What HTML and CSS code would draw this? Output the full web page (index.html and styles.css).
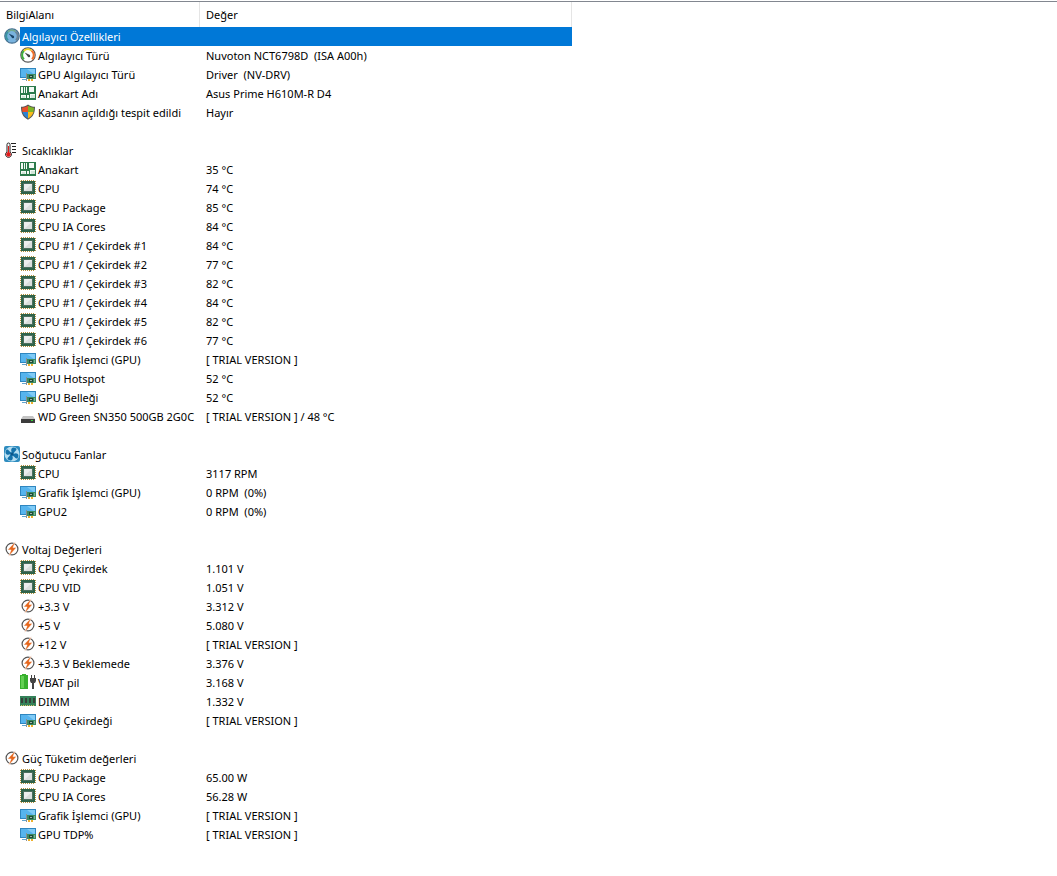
FILE: index.html
```html
<!DOCTYPE html>
<html lang="tr">
<head>
  <meta charset="UTF-8">
  <meta name="viewport" content="width=device-width, initial-scale=1.0">
  <title>Algılayıcı</title>
  <link rel="stylesheet" href="styles.css">
</head>
<body>
  <!-- Icon set -->
  <svg class="sprite" aria-hidden="true">
    <symbol id="gauge" viewBox="0 0 16 16">
      <circle cx="8" cy="8" r="7.2" fill="#fff" stroke="#555" stroke-width="1.2"/>
      <path d="M4 12.2A5.6 5.6 0 0 1 4 3.8" fill="none" stroke="#3fae3c" stroke-width="2"/>
      <path d="M4 3.8A5.6 5.6 0 0 1 11.5 3.6" fill="none" stroke="#f2d21f" stroke-width="2"/>
      <path d="M11.5 3.6A5.6 5.6 0 0 1 12 12.2" fill="none" stroke="#f0702a" stroke-width="2"/>
      <path d="M4.6 5.4L9 7.6A1.3 1.3 0 1 1 7.6 9.2Z" fill="#444"/>
    </symbol>
    <symbol id="gauge-selected" viewBox="0 0 16 16">
      <circle cx="8" cy="8" r="7.2" fill="#79b3df" stroke="#456f90" stroke-width="1.3"/>
      <path d="M4 12.2A5.6 5.6 0 0 1 4 3.8" fill="none" stroke="#3a94a0" stroke-width="2"/>
      <path d="M4 3.8A5.6 5.6 0 0 1 11.5 3.6" fill="none" stroke="#72a890" stroke-width="2"/>
      <path d="M11.5 3.6A5.6 5.6 0 0 1 12 12.2" fill="none" stroke="#6a8498" stroke-width="2"/>
      <path d="M4.6 5.4L9 7.6A1.3 1.3 0 1 1 7.6 9.2Z" fill="#1b4468"/>
    </symbol>
    <symbol id="gpu" viewBox="0 0 16 16">
      <path d="M0 2h16v10H0z" fill="#2f86bf"/>
      <path d="M1 3h14v8H1z" fill="#56b4ee"/>
      <path d="M7 3h8v6z" fill="#80cbf6"/>
      <path d="M2 13h4v1H2z" fill="#62a5cf"/>
      <path d="M6 7h1v8H6z" fill="#8b8f91"/>
      <path d="M7 8h9v5H7z" fill="#3c8a62"/>
      <path d="M9 9h4v3H9z" fill="#1d4c37"/>
      <path d="M10 10h2v1h-2z" fill="#9fb8ab"/>
      <path d="M14 9h1v3h-1z" fill="#7cb597"/>
      <path d="M8 13h2v2H8zM11 13h2v2h-2z" fill="#eeb02c"/>
    </symbol>
    <symbol id="board" viewBox="0 0 16 16">
      <path d="M0 1h16v14H0z" fill="#2b7a4b"/>
      <path d="M1 2h2v6H1zM4 2h1v6H4zM6 2h1v6H6zM9 2h5v5H9zM1 10h5v3H1zM7 10h2v3H7zM10 9h5v4h-5z" fill="#f3faf5"/>
      <path d="M2 11h3v2H2zM11 10h4v3h-4z" fill="#d2e6d9"/>
    </symbol>
    <symbol id="shield" viewBox="0 0 16 16">
      <path d="M8 0.5C10 2 12.5 2.8 15 2.8C15 8.5 13.5 13 8 15.8C2.5 13 1 8.5 1 2.8C3.5 2.8 6 2 8 0.5Z" fill="#555"/>
      <path d="M8 1.8V8H2.5C2.1 6.5 2 5 2 3.7C4.3 3.6 6.3 2.9 8 1.8Z" fill="#e8502a"/>
      <path d="M8 1.8C9.7 2.9 11.7 3.6 14 3.7C14 5 13.9 6.5 13.5 8H8Z" fill="#7fb526"/>
      <path d="M2.5 8H8V14.6C5.2 13 3.3 11 2.5 8Z" fill="#2d82d2"/>
      <path d="M8 8H13.5C12.7 11 10.8 13 8 14.6Z" fill="#f8bd1c"/>
    </symbol>
    <symbol id="thermo" viewBox="0 0 16 16">
      <path d="M3 10V2.5a1.5 1.5 0 0 1 3 0V10a2.900 2.900 0 1 1-3 0z" fill="#fff" stroke="#222"/>
      <path d="M4 4h1v7H4z" fill="#e01b1b"/>
      <circle cx="4.500" cy="12.400" r="2.300" fill="#e01b1b"/>
      <path d="M7 1h5v1H7zM8 4h4v1H8zM8 7h4v1H8zM8 10h4v1H8z" fill="#222"/>
    </symbol>
    <symbol id="cpu" viewBox="0 0 16 16">
      <path d="M1 0.500h14M1 14.500h14M0.500 1v13M15.500 1v13" fill="none" stroke="#b58f3c" stroke-dasharray="1 1"/>
      <path d="M1 1h14v13H1z" fill="#2f6349"/>
      <path d="M3 3h10v9H3z" fill="#4c6f5e"/>
      <path d="M4 4h8v7H4z" fill="#dadedc"/>
      <path d="M4 4h8l-8 7z" fill="#eceeed"/>
    </symbol>
    <symbol id="disk" viewBox="0 0 16 16">
      <path d="M3 8h10l2 3H1z" fill="#c4c4c4"/>
      <path d="M1 11h14v4H1z" fill="#3c3c3c"/>
      <path d="M11 12h2v1h-2z" fill="#37d63d"/>
    </symbol>
    <symbol id="fan" viewBox="0 0 16 16">
      <rect width="16" height="16" rx="2" fill="#2e8cbf"/>
      <circle cx="8" cy="8" r="7.500" fill="#b5def2"/>
      <path d="M7 7C2.500 5 4 1 8 1C9.500 2.500 8 4 9 7C11 2.500 15 4 15 8C13.500 9.500 12 8 9 9C13.500 11 12 15 8 15C6.500 13.500 8 12 7 9C5 13.500 1 12 1 8C2.500 6.500 4 8 7 7Z" fill="#1673ab" transform="rotate(40 8 8)"/>
      <circle cx="8" cy="8" r="1.500" fill="#0c5588"/>
    </symbol>
    <symbol id="bolt" viewBox="0 0 16 16">
      <circle cx="8" cy="8" r="5.900" fill="#fff" stroke="#555" stroke-width="1.200"/>
      <path d="M11.500 0.500L3.600 8.900h3.500L4.500 15.500l8-8.900H9z" fill="#e5661c" stroke="#fff" stroke-width="0.500"/>
    </symbol>
    <symbol id="battery" viewBox="0 0 16 16">
      <path d="M2 0h4v1h2v14H0V1h2z" fill="#37b02d"/>
      <path d="M1 2h3v12H1z" fill="#62d052"/>
      <path d="M11 1h1v3h-1zM14 1h1v3h-1zM10 4h6v3l-1 2h-1v6h-2V9h-1l-1-2z" fill="#444"/>
    </symbol>
    <symbol id="ram" viewBox="0 0 16 16">
      <path d="M0 3h16v10H0z" fill="#35825a"/>
      <path d="M1 5h2v5H1zM5 5h2v5H5zM9 5h2v5H9zM13 5h2v5h-2z" fill="#36403a"/>
      <path d="M1 12h1v1H1zM3 12h1v1H3zM5 12h1v1H5zM7 12h1v1H7zM9 12h1v1H9zM11 12h1v1h-1zM13 12h1v1h-1z" fill="#d8c26a"/>
    </symbol>
  </svg>

  <div class="panel">
    <table class="sensors">
      <colgroup>
        <col class="col-name">
        <col class="col-value">
      </colgroup>
      <thead>
        <tr><th scope="col">BilgiAlanı</th><th scope="col">Değer</th></tr>
      </thead>
      <!-- Sensor properties -->
      <tbody>
        <tr class="group selected"><td><div class="item"><svg class="icon"><use href="#gauge-selected"/></svg><span class="label">Algılayıcı Özellikleri</span></div></td><td></td></tr>
        <tr><td><div class="item"><svg class="icon"><use href="#gauge"/></svg><span class="label">Algılayıcı Türü</span></div></td><td>Nuvoton NCT6798D  (ISA A00h)</td></tr>
        <tr><td><div class="item"><svg class="icon"><use href="#gpu"/></svg><span class="label">GPU Algılayıcı Türü</span></div></td><td>Driver  (NV-DRV)</td></tr>
        <tr><td><div class="item"><svg class="icon"><use href="#board"/></svg><span class="label">Anakart Adı</span></div></td><td>Asus Prime H610M-R D4</td></tr>
        <tr><td><div class="item"><svg class="icon"><use href="#shield"/></svg><span class="label">Kasanın açıldığı tespit edildi</span></div></td><td>Hayır</td></tr>
        <tr class="spacer"><td colspan="2"></td></tr>
      </tbody>
      <!-- Temperatures -->
      <tbody>
        <tr class="group"><td><div class="item"><svg class="icon"><use href="#thermo"/></svg><span class="label">Sıcaklıklar</span></div></td><td></td></tr>
        <tr><td><div class="item"><svg class="icon"><use href="#board"/></svg><span class="label">Anakart</span></div></td><td>35 °C</td></tr>
        <tr><td><div class="item"><svg class="icon"><use href="#cpu"/></svg><span class="label">CPU</span></div></td><td>74 °C</td></tr>
        <tr><td><div class="item"><svg class="icon"><use href="#cpu"/></svg><span class="label">CPU Package</span></div></td><td>85 °C</td></tr>
        <tr><td><div class="item"><svg class="icon"><use href="#cpu"/></svg><span class="label">CPU IA Cores</span></div></td><td>84 °C</td></tr>
        <tr><td><div class="item"><svg class="icon"><use href="#cpu"/></svg><span class="label">CPU #1 / Çekirdek #1</span></div></td><td>84 °C</td></tr>
        <tr><td><div class="item"><svg class="icon"><use href="#cpu"/></svg><span class="label">CPU #1 / Çekirdek #2</span></div></td><td>77 °C</td></tr>
        <tr><td><div class="item"><svg class="icon"><use href="#cpu"/></svg><span class="label">CPU #1 / Çekirdek #3</span></div></td><td>82 °C</td></tr>
        <tr><td><div class="item"><svg class="icon"><use href="#cpu"/></svg><span class="label">CPU #1 / Çekirdek #4</span></div></td><td>84 °C</td></tr>
        <tr><td><div class="item"><svg class="icon"><use href="#cpu"/></svg><span class="label">CPU #1 / Çekirdek #5</span></div></td><td>82 °C</td></tr>
        <tr><td><div class="item"><svg class="icon"><use href="#cpu"/></svg><span class="label">CPU #1 / Çekirdek #6</span></div></td><td>77 °C</td></tr>
        <tr><td><div class="item"><svg class="icon"><use href="#gpu"/></svg><span class="label">Grafik İşlemci (GPU)</span></div></td><td>[ TRIAL VERSION ]</td></tr>
        <tr><td><div class="item"><svg class="icon"><use href="#gpu"/></svg><span class="label">GPU Hotspot</span></div></td><td>52 °C</td></tr>
        <tr><td><div class="item"><svg class="icon"><use href="#gpu"/></svg><span class="label">GPU Belleği</span></div></td><td>52 °C</td></tr>
        <tr><td><div class="item"><svg class="icon"><use href="#disk"/></svg><span class="label">WD Green SN350 500GB 2G0C</span></div></td><td>[ TRIAL VERSION ] / 48 °C</td></tr>
        <tr class="spacer"><td colspan="2"></td></tr>
      </tbody>
      <!-- Cooling fans -->
      <tbody>
        <tr class="group"><td><div class="item"><svg class="icon"><use href="#fan"/></svg><span class="label">Soğutucu Fanlar</span></div></td><td></td></tr>
        <tr><td><div class="item"><svg class="icon"><use href="#cpu"/></svg><span class="label">CPU</span></div></td><td>3117 RPM</td></tr>
        <tr><td><div class="item"><svg class="icon"><use href="#gpu"/></svg><span class="label">Grafik İşlemci (GPU)</span></div></td><td>0 RPM  (0%)</td></tr>
        <tr><td><div class="item"><svg class="icon"><use href="#gpu"/></svg><span class="label">GPU2</span></div></td><td>0 RPM  (0%)</td></tr>
        <tr class="spacer"><td colspan="2"></td></tr>
      </tbody>
      <!-- Voltages -->
      <tbody>
        <tr class="group"><td><div class="item"><svg class="icon"><use href="#bolt"/></svg><span class="label">Voltaj Değerleri</span></div></td><td></td></tr>
        <tr><td><div class="item"><svg class="icon"><use href="#cpu"/></svg><span class="label">CPU Çekirdek</span></div></td><td>1.101 V</td></tr>
        <tr><td><div class="item"><svg class="icon"><use href="#cpu"/></svg><span class="label">CPU VID</span></div></td><td>1.051 V</td></tr>
        <tr><td><div class="item"><svg class="icon"><use href="#bolt"/></svg><span class="label">+3.3 V</span></div></td><td>3.312 V</td></tr>
        <tr><td><div class="item"><svg class="icon"><use href="#bolt"/></svg><span class="label">+5 V</span></div></td><td>5.080 V</td></tr>
        <tr><td><div class="item"><svg class="icon"><use href="#bolt"/></svg><span class="label">+12 V</span></div></td><td>[ TRIAL VERSION ]</td></tr>
        <tr><td><div class="item"><svg class="icon"><use href="#bolt"/></svg><span class="label">+3.3 V Beklemede</span></div></td><td>3.376 V</td></tr>
        <tr><td><div class="item"><svg class="icon"><use href="#battery"/></svg><span class="label">VBAT pil</span></div></td><td>3.168 V</td></tr>
        <tr><td><div class="item"><svg class="icon"><use href="#ram"/></svg><span class="label">DIMM</span></div></td><td>1.332 V</td></tr>
        <tr><td><div class="item"><svg class="icon"><use href="#gpu"/></svg><span class="label">GPU Çekirdeği</span></div></td><td>[ TRIAL VERSION ]</td></tr>
        <tr class="spacer"><td colspan="2"></td></tr>
      </tbody>
      <!-- Power -->
      <tbody>
        <tr class="group"><td><div class="item"><svg class="icon"><use href="#bolt"/></svg><span class="label">Güç Tüketim değerleri</span></div></td><td></td></tr>
        <tr><td><div class="item"><svg class="icon"><use href="#cpu"/></svg><span class="label">CPU Package</span></div></td><td>65.00 W</td></tr>
        <tr><td><div class="item"><svg class="icon"><use href="#cpu"/></svg><span class="label">CPU IA Cores</span></div></td><td>56.28 W</td></tr>
        <tr><td><div class="item"><svg class="icon"><use href="#gpu"/></svg><span class="label">Grafik İşlemci (GPU)</span></div></td><td>[ TRIAL VERSION ]</td></tr>
        <tr><td><div class="item"><svg class="icon"><use href="#gpu"/></svg><span class="label">GPU TDP%</span></div></td><td>[ TRIAL VERSION ]</td></tr>
      </tbody>
    </table>
  </div>
</body>
</html>
```
FILE: styles.css
```css
body {
  margin: 0;
  background: #fff;
  color: #000;
  font-family: "Noto Sans", "Segoe UI", sans-serif;
  font-size: 11px;
  line-height: 19px;
}
.sprite {
  display: none;
}
.panel {
  margin-top: 1px;
  border-top: 1px solid #828790;
}
.sensors {
  table-layout: fixed;
  width: 572px;
  border-spacing: 0;
}
.col-name {
  width: 200px;
}
th {
  height: 25px;
  padding: 0 6px;
  border-right: 1px solid #e5e5e5;
  box-sizing: border-box;
  font-weight: normal;
  text-align: left;
}
td {
  height: 19px;
  padding: 0;
  white-space: pre;
}
td + td {
  padding-left: 6px;
}
.item {
  display: flex;
  height: 19px;
  padding-left: 20px;
}
.group .item {
  padding-left: 4px;
}
.icon {
  flex: none;
  width: 16px;
  height: 16px;
  margin-top: 1px;
}
.label {
  flex: 1;
  padding-left: 2px;
}
.selected .label,
.selected td + td {
  background: #0078d7;
  color: #fff;
}
```
